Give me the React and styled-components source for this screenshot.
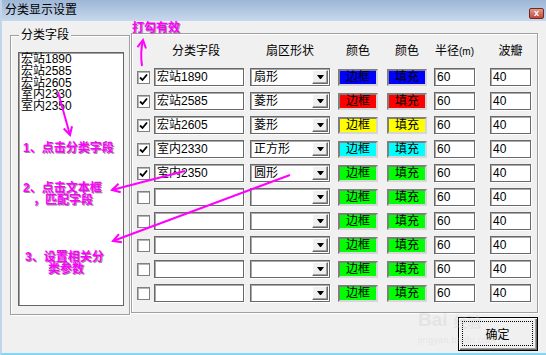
import React from 'react';
import styled, { createGlobalStyle } from 'styled-components';

const FONT = '"Liberation Sans", "Noto Sans CJK SC", sans-serif';

const rows = [
  { on: true, name: '宏站1890', shape: '扇形', color: '#0000ff' },
  { on: true, name: '宏站2585', shape: '菱形', color: '#ff0000' },
  { on: true, name: '宏站2605', shape: '菱形', color: '#ffff00' },
  { on: true, name: '室内2330', shape: '正方形', color: '#00ffff' },
  { on: true, name: '室内2350', shape: '圆形', color: '#00ff00' },
  { on: false, name: '', shape: '', color: '#00ff00' },
  { on: false, name: '', shape: '', color: '#00ff00' },
  { on: false, name: '', shape: '', color: '#00ff00' },
  { on: false, name: '', shape: '', color: '#00ff00' },
  { on: false, name: '', shape: '', color: '#00ff00' },
];

const listItems = ['宏站1890', '宏站2585', '宏站2605', '室内2330', '室内2350'];

const notes = [
  { x: 132, y: 22, text: '打勾有效' },
  { x: 23, y: 142, text: '1、点击分类字段' },
  { x: 23, y: 182, text: '2、点击文本框' },
  { x: 33, y: 194, text: '，匹配字段' },
  { x: 25, y: 251, text: '3、设置相关分' },
  { x: 48, y: 263, text: '类参数' },
];

const arrows = [
  { d: 'M58 92 L70 135', tip: [70, 135], from: [58, 92] },
  { d: 'M185 171 L112 190', tip: [112, 190], from: [185, 171] },
  { d: 'M290 175 L113 241', tip: [113, 241], from: [290, 175] },
  { d: 'M142 66 Q140 52 143 40', tip: [143, 40], from: [141, 52] },
];

function arrowHead(tip, from, len = 9, spread = 0.5) {
  const a = Math.atan2(from[1] - tip[1], from[0] - tip[0]);
  const p1 = [tip[0] + len * Math.cos(a + spread), tip[1] + len * Math.sin(a + spread)];
  const p2 = [tip[0] + len * Math.cos(a - spread), tip[1] + len * Math.sin(a - spread)];
  return `M${p1[0]} ${p1[1]} L${tip[0]} ${tip[1]} L${p2[0]} ${p2[1]}`;
}

const GlobalStyle = createGlobalStyle`
  html, body {
    margin: 0;
    padding: 0;
    background: #f0f0f0;
  }
  body {
    font-family: ${FONT};
    font-size: 12px;
    color: #000;
  }
`;

const Window = styled.div`
  position: relative;
  box-sizing: border-box;
  width: 546px;
  height: 355px;
  background: #f0f0f0;
  border-left: 2px solid #c3d5ea;
  border-bottom: 2px solid #7fd8f6;
  display: flex;
  flex-direction: column;
  overflow: hidden;
`;

const TitleBar = styled.div`
  height: 21px;
  flex: none;
  margin-left: -2px;
  padding: 0 2px 0 5px;
  display: flex;
  justify-content: space-between;
  align-items: flex-start;
  background: linear-gradient(to bottom, #9db7d6, #c6d8ec);
`;

const Title = styled.div`
  line-height: 21px;
  font-size: 12px;
`;

const CloseBtn = styled.div`
  box-sizing: border-box;
  width: 15px;
  height: 11px;
  margin-top: 8px;
  border: 1px solid #6f2a22;
  border-radius: 2px;
  background: linear-gradient(to bottom, #e59a8e, #c2483a);
  color: #fff;
  font: bold 9px ${FONT};
  line-height: 9px;
  text-align: center;
`;

const Body = styled.div`
  flex: 1;
  padding: 12px 8px 0 8px;
  display: flex;
  flex-direction: column;
`;

const Groups = styled.div`
  display: flex;
  align-items: flex-start;
`;

const GroupBox = styled.div`
  position: relative;
  box-sizing: border-box;
  height: 280px;
  border: 1px solid #a0a0a0;
  box-shadow: inset 1px 1px 0 #fff, 1px 1px 0 #fff;
`;

const LeftGroup = styled(GroupBox)`
  width: 120px;
  margin-top: 2px;
  padding: 16px 6px 9px 7px;
`;

const RightGroup = styled(GroupBox)`
  flex: 1;
  margin-left: 1px;
  padding: 10px 0 0 5px;
`;

const Legend = styled.div`
  position: absolute;
  left: 8px;
  top: -8px;
  padding: 0 2px;
  background: #f0f0f0;
  line-height: 14px;
  font-size: 12px;
`;

const ListBox = styled.div`
  box-sizing: border-box;
  width: 106px;
  height: 254px;
  background: #fff;
  border: 1px solid #646464;
  box-shadow: inset 1px 1px 0 #a0a0a0;
  padding: 1px 0 0 2px;
`;

const ListItem = styled.div`
  line-height: 11.75px;
  font-size: 12px;
  white-space: nowrap;
`;

const Table = styled.div`
  display: grid;
  grid-template-columns: 17px 96px 88px 49px 47px 56px 41px;
  grid-template-rows: 18px;
  grid-auto-rows: 18px;
  row-gap: 6px;
  align-items: center;
  justify-items: start;
`;

const Head = styled.div`
  align-self: start;
  width: ${p => p.$w}px;
  text-align: center;
  line-height: 14px;
  font-size: 12px;
  white-space: nowrap;
`;

const Small = styled.span`
  font-size: 10px;
`;

const Check = styled.div`
  box-sizing: border-box;
  width: 13px;
  height: 13px;
  background: #fff;
  border: 1px solid #808080;
  box-shadow: inset 1px 1px 0 #b4b4b4;
  display: flex;
  align-items: center;
  justify-content: center;
`;

const Field = styled.div`
  box-sizing: border-box;
  width: ${p => p.$w}px;
  height: 18px;
  background: #fff;
  border: 1px solid #686868;
  box-shadow: inset 1px 1px 0 #a8a8a8, 1px 1px 0 #fff;
  padding-left: 2px;
  line-height: 16px;
  font-size: 12px;
  color: #000;
  white-space: nowrap;
  overflow: hidden;
`;

const Combo = styled(Field)`
  display: flex;
  align-items: center;
  padding: 0 1px 0 3px;
`;

const ComboText = styled.span`
  flex: 1;
`;

const DropBtn = styled.div`
  box-sizing: border-box;
  width: 16px;
  height: 14px;
  background: #f0f0f0;
  border: 1px solid;
  border-color: #fff #696969 #696969 #fff;
  box-shadow: inset -1px -1px 0 #a0a0a0;
  display: flex;
  align-items: center;
  justify-content: center;

  &::after {
    content: '';
    width: 1px;
    border-left: 3px solid transparent;
    border-right: 3px solid transparent;
    border-top: 4px solid #000;
  }
`;

const Swatch = styled.div`
  box-sizing: border-box;
  width: 40px;
  height: 17px;
  background: ${p => p.$c};
  border: 2px solid;
  border-color: #7f7f7f #d6d6d6 #d6d6d6 #7f7f7f;
  display: flex;
  align-items: center;
  justify-content: center;
  line-height: 13px;
  font-size: 12px;
  color: #000;
`;

const Footer = styled.div`
  display: flex;
  justify-content: flex-end;
  margin-top: 2px;
`;

const OkButton = styled.div`
  box-sizing: border-box;
  width: 80px;
  height: 34px;
  padding: 3px 4px 4px 3px;
  background: #f0f0f0;
  border: 1px solid #000;
  box-shadow: inset 1px 1px 0 #fff, inset -1px -1px 0 #696969, inset -2px -2px 0 #a0a0a0;
  display: flex;
`;

const FocusRing = styled.div`
  flex: 1;
  border: 1px dotted #000;
  display: flex;
  align-items: center;
  justify-content: center;
  font-size: 12px;
`;

const Note = styled.div`
  position: absolute;
  left: ${p => p.$x}px;
  top: ${p => p.$y}px;
  color: #ff00ff;
  font: bold 12px ${FONT};
  line-height: 12px;
  white-space: nowrap;
  text-shadow: 1px 1px 0 #9a8a9a;
  pointer-events: none;
`;

const Overlay = styled.svg`
  position: absolute;
  left: -2px;
  top: 0;
  pointer-events: none;
`;

const Watermark = styled.div`
  position: absolute;
  left: 416px;
  top: 302px;
  color: rgba(200, 200, 200, 0.3);
  pointer-events: none;
  line-height: 1;
`;

const MarkBig = styled.div`
  display: flex;
  align-items: flex-end;
  gap: 6px;
  font: bold 19px ${FONT};
  margin-top: 7px;
`;

const MarkSmall = styled.div`
  font: 9px ${FONT};
  margin-top: 4px;
  letter-spacing: 0.3px;
`;

function CheckMark() {
  return (
    <svg width="9" height="9" viewBox="0 0 9 9">
      <path d="M1 4.5 L3.5 7 L8 1.5" stroke="#000" strokeWidth="1.8" fill="none" />
    </svg>
  );
}

export default function App() {
  return (
    <>
      <GlobalStyle />
      <Window>
        <TitleBar>
          <Title>分类显示设置</Title>
          <CloseBtn>x</CloseBtn>
        </TitleBar>
        <Body>
          <Groups>
            <LeftGroup>
              <Legend>分类字段</Legend>
              <ListBox>
                {listItems.map(t => (
                  <ListItem key={t}>{t}</ListItem>
                ))}
              </ListBox>
            </LeftGroup>
            <RightGroup>
              <Table>
                <span />
                <Head $w={84}>分类字段</Head>
                <Head $w={80}>扇区形状</Head>
                <Head $w={40}>颜色</Head>
                <Head $w={40}>颜色</Head>
                <Head $w={41}>
                  半径<Small>(m)</Small>
                </Head>
                <Head $w={41}>波瓣</Head>
                {rows.map((r, i) => (
                  <React.Fragment key={i}>
                    <Check>{r.on && <CheckMark />}</Check>
                    <Field $w={90}>{r.name}</Field>
                    <Combo $w={80}>
                      <ComboText>{r.shape}</ComboText>
                      <DropBtn />
                    </Combo>
                    <Swatch $c={r.color}>边框</Swatch>
                    <Swatch $c={r.color}>填充</Swatch>
                    <Field $w={41}>60</Field>
                    <Field $w={41}>40</Field>
                  </React.Fragment>
                ))}
              </Table>
            </RightGroup>
          </Groups>
          <Footer>
            <OkButton>
              <FocusRing>确定</FocusRing>
            </OkButton>
          </Footer>
        </Body>

        <Watermark>
          <MarkBig>
            <span>Bai</span>
            <span style={{ fontSize: 14 }}>经验</span>
          </MarkBig>
          <MarkSmall>jingyan.baidu.com</MarkSmall>
        </Watermark>

        {notes.map(n => (
          <Note key={n.text} $x={n.x - 2} $y={n.y}>
            {n.text}
          </Note>
        ))}

        <Overlay width="546" height="355" viewBox="0 0 546 355">
          {arrows.map((a, i) => (
            <g key={i} stroke="#ff00ff" strokeWidth="2" fill="none">
              <path d={a.d} />
              <path d={arrowHead(a.tip, a.from)} />
            </g>
          ))}
        </Overlay>
      </Window>
    </>
  );
}
